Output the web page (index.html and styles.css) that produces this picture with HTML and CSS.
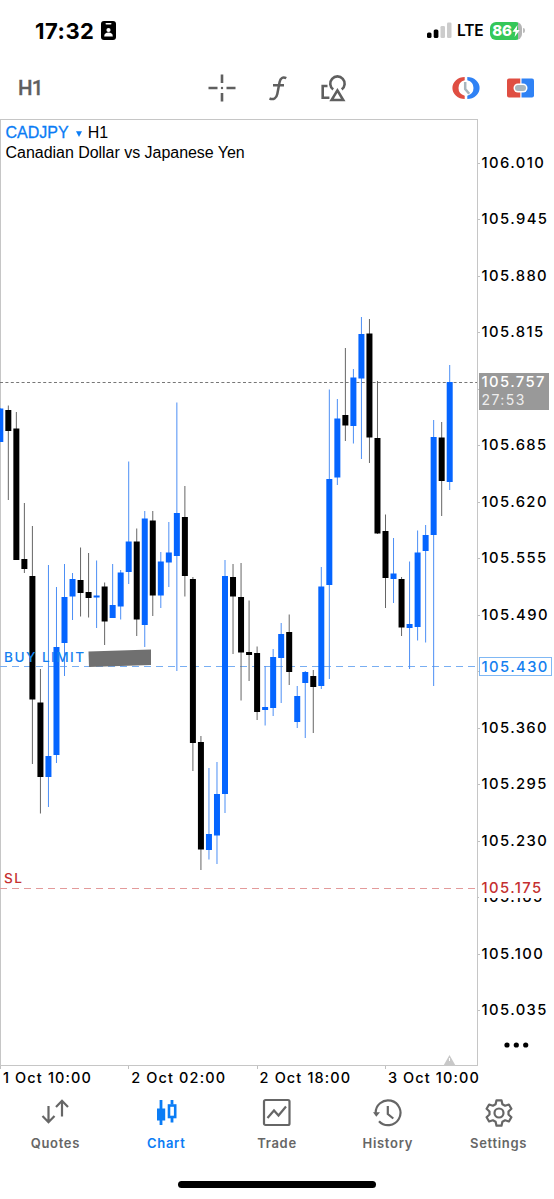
FILE: index.html
```
<!DOCTYPE html>
<html lang="en">
<head>
<meta charset="utf-8">
<title>CADJPY H1</title>
<link rel="stylesheet" href="styles.css">
</head>
<body>
<div class="app">
  <header class="status">
    <div class="clock">17:32</div>
    <svg class="badge-icon" width="15" height="19" viewBox="0 0 15 19"><rect width="15" height="19" rx="3"/><rect x="4.5" y="2" width="6" height="1.6" rx=".8" fill="#fff"/><circle cx="7.5" cy="9" r="2.1" fill="#fff"/><path d="M3.2 15.6c0-3 1.800-4 4.300-4s4.300 1 4.300 4z" fill="#fff"/></svg>
    <div class="status-right">
      <svg width="26" height="17" viewBox="0 0 26 17"><rect x="0" y="10.500" width="4.500" height="5.500" rx="1.500"/><rect x="6.700" y="7.500" width="4.700" height="8.500" rx="1.500"/><rect x="13.500" y="4" width="4.500" height="12" rx="1.300" fill="#ccc"/><rect x="20" y="0.500" width="4.500" height="15.500" rx="1.300" fill="#ccc"/></svg>
      <span class="lte">LTE</span>
      <div class="battery"><span>86</span><svg width="8" height="12" viewBox="0 0 8 12"><path d="M5.500 0 0.500 6.800h3L2.600 12 7.700 5h-3z" fill="#fff"/></svg></div>
      <i class="battery-cap"></i>
    </div>
  </header>

  <nav class="toolbar">
    <span class="timeframe">H1</span>
    <svg class="tool cross" width="28" height="28" viewBox="0 0 28 28"><path d="M14 .5v8.500M14 19v8.500M.5 14h9M18.500 14h9" stroke="#5f5f5f" stroke-width="2.600"/><circle cx="14" cy="14" r="1.200" fill="#5f5f5f"/></svg>
    <svg class="tool func" width="20" height="28" viewBox="0 0 20 28"><path d="M18.300 4.200C14.900 2.500 12.400 4 11.600 8L9.300 20C8.500 24.200 5.500 26.200 1.500 24.500M5 11.300h11" fill="none" stroke="#5f5f5f" stroke-width="2.500"/></svg>
    <svg class="tool shapes" width="28" height="28" viewBox="0 0 28 28"><g fill="none" stroke="#5f5f5f" stroke-width="2.600"><path d="M7.500 12H2.700v11.800h6.700"/><path d="M13.200 15.400a7.200 7.200 0 1 1 8.500 0"/><path d="M17.400 16.400l5.800 9.600H11.600z"/></g></svg>
    <svg class="tool timer" width="28" height="24" viewBox="0 0 28 24"><path d="M12.700 1A12.300 11 0 0 0 12.700 23v-3.300A8.500 8 0 0 1 12.700 4.300z" fill="#df4e42"/><path d="M15.300 1A12.300 11 0 0 1 15.300 23v-3.300A8.500 8 0 0 0 15.300 4.300z" fill="#2f82f5"/><path d="M13.200 6v7l4 4.800" fill="none" stroke="#a8b5bd" stroke-width="2.500"/></svg>
    <svg class="tool trade" width="28" height="20" viewBox="0 0 28 20"><path d="M2 .5h11.300v19H2a2 2 0 0 1-2-2v-15a2 2 0 0 1 2-2z" fill="#df4e42"/><path d="M14.500.5H25a2 2 0 0 1 2 2v15a2 2 0 0 1-2 2H14.500z" fill="#2f82f5"/><rect x="6.500" y="5.500" width="14" height="9" rx="4.500" fill="#fff"/><rect x="8" y="7" width="11" height="6" rx="3" fill="#a8b5bd"/></svg>
  </nav>

  <main class="chart">
    <section class="plot">
      <svg id="candles" class="candles" width="477" height="946" viewBox="0 120 477 946" aria-hidden="true"></svg>
      <div class="symbol"><span class="pair">CADJPY</span><svg width="6" height="6" viewBox="0 0 6 6"><path d="M0 .3h6L3 6z" fill="#0a7cf5"/></svg><span>H1</span></div>
      <div class="description">Canadian Dollar vs Japanese Yen</div>
      <span class="order-label buy">BUY LIMIT</span>
      <span class="order-label stop">SL</span>
    </section>
    <aside class="prices">
      <div>106.010</div><div>105.945</div><div>105.880</div><div>105.815</div><div></div><div>105.685</div><div>105.620</div><div>105.555</div><div>105.490</div><div></div><div>105.360</div><div>105.295</div><div>105.230</div><div>105.165</div><div>105.100</div><div>105.035</div>
      <p class="tag current">105.757<small>27:53</small></p>
      <p class="tag limit">105.430</p>
      <p class="tag loss">105.175</p>
      <svg class="more" width="26" height="6" viewBox="0 0 26 6"><circle cx="3" cy="3" r="2.600"/><circle cx="12.300" cy="3" r="2.600"/><circle cx="21.700" cy="3" r="2.600"/></svg>
    </aside>
  </main>

  <div class="dates"><span>1 Oct 10:00</span><span>2 Oct 02:00</span><span>2 Oct 18:00</span><span>3 Oct 10:00</span></div>

  <nav class="tabs">
    <a><svg width="30" height="30" viewBox="0 0 30 30"><path d="M8.500 8v16M2.500 18l6 6.200 6-6.200M22 18.500V3M16 9l6-6.200L28 9"/></svg>Quotes</a>
    <a class="active"><svg width="30" height="30" viewBox="0 0 30 30"><path d="M10 2v25M21 2v4.500M21 20v4.500" stroke-width="2.800"/><rect x="6" y="10.500" width="8.200" height="12" fill="#0a7cf5" stroke="none"/><rect x="18" y="7.500" width="6.200" height="11.500" stroke-width="2.600"/></svg>Chart</a>
    <a><svg width="30" height="30" viewBox="0 0 30 30"><rect x="2" y="2" width="25.500" height="25" rx="1.500"/><path d="M5.500 20l6.500-7.500 4.500 5L24 8.500"/></svg>Trade</a>
    <a><svg width="30" height="30" viewBox="1 0 30 30"><path d="M3.700 15.500A12.400 12.400 0 1 1 7 23.200M15.800 8v8l5.500 4.500"/><path d="M1 14.200h7L4.300 18.800z" fill="#666" stroke="none"/></svg>History</a>
    <a><svg width="30" height="30" viewBox="0 0 30 30"><path stroke-linejoin="round" d="M12.500 2.300h5l.9 3.900 2.700 1.500 3.800-1.200 2.500 4.300-2.900 2.700v3l2.900 2.700-2.500 4.300-3.800-1.200-2.700 1.500-.9 3.900h-5l-.9-3.900-2.700-1.500-3.800 1.200-2.500-4.300 2.900-2.700v-3l-2.900-2.700 2.500-4.300 3.800 1.200 2.700-1.500z"/><circle cx="15" cy="15" r="4.500"/></svg>Settings</a>
  </nav>
  <div class="home"></div>
</div>
<script src="chart.js"></script>
</body>
</html>
```
FILE: styles.css
```
* { box-sizing: border-box; }
body { margin: 0; background: #fff; color: #000; font-family: Inter, "Liberation Sans", sans-serif; }
.app { width: 554px; height: 1199px; display: flex; flex-direction: column; overflow: hidden; }
.status { height: 60px; display: flex; align-items: center; padding: 1px 29px 0 35px; }
.clock { width: 60px; font-weight: 700; font-size: 22px; letter-spacing: .5px; white-space: nowrap; }
.badge-icon { margin-left: 6px; }
.status-right { margin-left: auto; display: flex; align-items: center; }
.lte { margin-left: 4px; font-weight: 600; font-size: 15.500px; letter-spacing: -.1px; width: 28px; }
.battery { margin-left: 5px; width: 32px; height: 18px; border-radius: 6px; display: flex; align-items: center; justify-content: center; background: linear-gradient(90deg, #35c759 86%, #b5b5b5 86%); color: #fff; font-size: 15px; font-weight: 800; letter-spacing: -.2px; }
.battery-cap { width: 2px; height: 5px; margin-left: 1px; border-radius: 0 2px 2px 0; background: #bcbcbc; }
.toolbar { height: 59px; display: flex; align-items: center; padding: 0 19px 3px 18px; }
.timeframe { width: 189px; font: 500 20.500px Roboto, sans-serif; letter-spacing: -.8px; color: #5f5f5f; -webkit-text-stroke: .3px #5f5f5f; }
.cross { margin-left: 1px; }
.tool { flex: none; }
.func { margin-left: 32px; }
.shapes { margin-left: 32px; }
.timer { margin-left: 104px; }
.trade { margin-left: 27px; }
.chart { height: 947px; display: grid; grid-template-columns: 478px 76px; }
.plot { position: relative; height: 947px; border: 1px solid #c6c6c6; padding: 3px 0 0 4.500px; font: 16px/20px "Liberation Sans", sans-serif; }
.candles { position: absolute; left: -1px; top: 0; }
.symbol { display: flex; align-items: center; gap: 5px; position: relative; height: 20px; }
.symbol svg { margin: 2px 1px 0 2px; }
.pair { color: #0a7cf5; -webkit-text-stroke: .3px #0a7cf5; }
.description { position: relative; white-space: nowrap; letter-spacing: -.03px; }
.order-label { position: absolute; left: 3px; font: 500 13.600px/16px Inter, sans-serif; letter-spacing: 1.450px; white-space: nowrap; }
.buy { top: 529px; color: #1480f0; }
.stop { top: 750px; color: #c53030; }
.prices { position: relative; padding-top: 15.500px; font-weight: 500; font-size: 14.800px; letter-spacing: 1.400px; }
.prices div { height: 56.500px; line-height: 57px; padding-left: 3.500px; position: relative; }
.prices div::before { content: ""; position: absolute; left: 0; top: 28px; width: 2px; height: 1px; background: #c0c0c0; }
.tag { position: absolute; margin: 0; left: 1px; padding-left: 2.500px; line-height: 19px; }
.current { top: 254px; width: 70px; height: 37px; background: #999; color: #fff; }
.current small { display: block; font-size: 14px; font-weight: 400; line-height: 15px; color: #eee; }
.limit { top: 538px; width: 73px; height: 19px; padding-left: 1.500px; line-height: 18px; border: 1px solid #80b8f4; background: #fff; color: #1480f0; }
.loss { top: 760px; width: 72px; height: 19px; background: #fff; color: #c53030; }
.more { position: absolute; left: 26px; top: 923px; }
.dates { height: 24px; display: grid; grid-template-columns: 128.300px 128.300px 128.300px 1fr; font-weight: 500; font-size: 14.500px; line-height: 23px; letter-spacing: 1.120px; white-space: nowrap; }
.dates span { position: relative; padding-left: 3px; }
.dates span::before { content: ""; position: absolute; left: 0; top: 0; width: 1px; height: 3px; background: #c0c0c0; }
.tabs { height: 88px; display: grid; grid-template-columns: repeat(5, 1fr); padding-top: 8px; }
.tabs a { display: flex; flex-direction: column; align-items: center; gap: 7px; color: #666; font-weight: 600; font-size: 13px; line-height: 17px; letter-spacing: .7px; }
.tabs svg { fill: none; stroke: #666; stroke-width: 2.200; }
.tabs .active { color: #0a7cf5; }
.tabs .active svg { stroke: #0a7cf5; }
.home { width: 198px; height: 7px; margin: 3px 0 0 178px; border-radius: 4px; background: #000; flex: none; }
```
FILE: chart.js
```
// Each candle: direction (1 up, 0 down), high, low, body top, body bottom.
const candles = [
  [1,408,442,408.5,442],[0,405.5,500,410,431],[0,412,560,428.5,560],[0,503,573,559,569],
  [0,526,764,576,699.5],[0,669,813.5,702.5,777],[1,565,807,756,777],[1,587,763,647,755],
  [1,564,676,597,643],[1,573,620,579,596.5],[0,547.5,616.5,580,593],[0,553,617.5,592,598],
  [1,560.5,628,595.5,597.5],[0,582.5,645,586.5,621.5],[1,564,618,605,618],[1,570,619.5,572.5,606.5],
  [1,461.5,584,541.5,572],[0,528.5,636,541.5,619.5],[1,511,647,518.5,625],[0,511,616,520.5,595.5],
  [1,552,608,561.5,595.5],[1,522,587,552.5,562.5],[1,402.5,671,513,556],[0,486,596.5,517,576],
  [0,577,771,579,743],[0,736,870,742,849.5],[1,768,859.5,834,850],[1,762,864,794,835.5],
  [1,560,813,576,794],[0,564,654,577,596.5],[0,563,700.5,597,652.5],[0,600.5,681,652,655],
  [0,646.5,720,653,712],[1,666,725.5,707,710],[1,649,716,657,708],[1,623,703,634,658],
  [0,614.5,685,632,672],[1,686,728,696,722],[1,671,738,672,683],[0,670,733,676,687],
  [1,567,689,586.5,686],[1,389.5,679,479,585],[1,399,485,418.5,477.5],[0,348,441,415,425.5],
  [1,369,443.5,377.5,426],[1,317,459,334,378.5],[0,319,463,333.5,437.5],[0,381,534,438,533.5],
  [0,514.5,608,531,578],[1,538,603,573.5,579],[0,577,636,579,627.5],[1,561.5,669,624,628],
  [1,530.5,640.5,552.5,627],[1,525,642.5,535,551],[1,420,686,437,535],[0,422,516,437.5,481],
  [1,365,490,382,482]
];
const step = 8.025;
const firstX = 0.3;
let out = '<path d="M0 382.5H477" stroke="#777" stroke-dasharray="3 2.4"/>';
out += '<path d="M0 666.5H477" stroke="#78aef2" stroke-dasharray="7 5"/>';
out += '<path d="M0 888.5H477" stroke="#e39a9a" stroke-dasharray="7 5"/>';
candles.forEach(([up, high, low, top, bottom], i) => {
  const x = firstX + i * step;
  const wick = up ? '#4d8ff5' : '#666';
  const body = up ? '#0565ff' : '#000';
  out += `<rect x="${x - 0.5}" y="${high}" width="1" height="${low - high}" fill="${wick}"/>`;
  out += `<rect x="${x - 3}" y="${top}" width="6" height="${bottom - top}" fill="${body}"/>`;
});
out += '<path d="M88.500 651.500 151 649.500V665L89 667z" fill="#707070"/>';
out += '<path d="M443.500 1065.500l6-10.500 6 10.500z" fill="#c8c8c8"/><path d="M449.500 1058v3" stroke="#fff"/>';
document.getElementById('candles').innerHTML = out;
```
